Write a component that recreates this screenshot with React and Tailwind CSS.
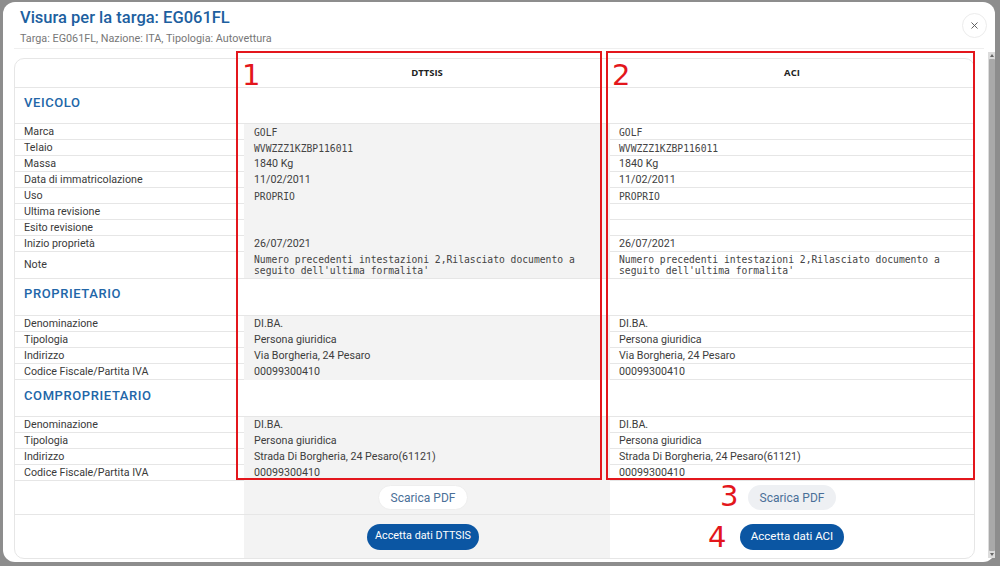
import { X } from "lucide-react";

const veicolo = [
  { label: "Marca", value: "GOLF", mono: true },
  { label: "Telaio", value: "WVWZZZ1KZBP116011", mono: true },
  { label: "Massa", value: "1840 Kg" },
  { label: "Data di immatricolazione", value: "11/02/2011" },
  { label: "Uso", value: "PROPRIO", mono: true },
  { label: "Ultima revisione", value: "" },
  { label: "Esito revisione", value: "" },
  { label: "Inizio proprietà", value: "26/07/2021" },
  {
    label: "Note",
    value: "Numero precedenti intestazioni 2,Rilasciato documento a seguito dell'ultima formalita'",
    mono: true,
    tall: true,
  },
];

const proprietario = [
  { label: "Denominazione", value: "DI.BA." },
  { label: "Tipologia", value: "Persona giuridica" },
  { label: "Indirizzo", value: "Via Borgheria, 24 Pesaro" },
  { label: "Codice Fiscale/Partita IVA", value: "00099300410" },
];

const comproprietario = [
  { label: "Denominazione", value: "DI.BA." },
  { label: "Tipologia", value: "Persona giuridica" },
  { label: "Indirizzo", value: "Strada Di Borgheria, 24 Pesaro(61121)" },
  { label: "Codice Fiscale/Partita IVA", value: "00099300410" },
];

function Value({ row }) {
  return (
    <div
      className={
        row.mono
          ? "font-['DejaVu_Sans_Mono',monospace] text-[9.7px] leading-[11px] text-[#444]"
          : "text-[10.7px] leading-[14px] text-[#3d3d3d]"
      }
    >
      {row.value}
    </div>
  );
}

function DataRow({ row }) {
  const h = row.tall ? "h-[27px]" : "h-[16px]";
  return (
    <div className={`grid grid-cols-[229px_366px_1fr] border-b border-[#e6e6e6] ${h}`}>
      <div className="flex items-center pl-[9px] text-[10.7px] text-[#3a3a3a]">
        {row.label}
      </div>
      <div className="flex items-center pl-[10px] bg-[#f3f3f3]">
        <Value row={row} />
      </div>
      <div className="flex items-center pl-[9px]">
        <Value row={row} />
      </div>
    </div>
  );
}

function Section({ title, h, pad }) {
  return (
    <div className={`grid grid-cols-[229px_366px_1fr] border-b border-[#e6e6e6] ${h}`}>
      <div className={`flex items-center pl-[9px] ${pad} text-[13px] font-medium tracking-[0.6px] text-[#2266a8]`}>
        {title}
      </div>
      <div />
      <div />
    </div>
  );
}

function Mark({ n, className }) {
  return (
    <div
      className={`absolute font-['DejaVu_Sans',sans-serif] text-[29px] leading-none text-[#e3161c] ${className}`}
    >
      {n}
    </div>
  );
}

export default function App() {
  return (
    <div className="relative w-[1000px] h-[566px] bg-[#8d8d8d] overflow-hidden font-['Roboto',sans-serif]">

      {/* Dialog */}
      <div className="ml-[3px] mt-[2px] w-[992px] h-[560px] bg-white rounded-[12px] flex flex-col">

        {/* Header */}
        <div className="relative h-[46px] px-[17px] pt-[5px]">
          <h1 className="text-[16.5px] leading-[22px] font-medium text-[#1d5f9f]">
            Visura per la targa: EG061FL
          </h1>
          <p className="mt-[3px] text-[10.8px] leading-[13px] text-[#777]">
            Targa: EG061FL, Nazione: ITA, Tipologia: Autovettura
          </p>
          <button className="absolute right-[8px] top-[11px] w-[25px] h-[25px] rounded-full border border-[#ececec] flex items-center justify-center text-[#555]">
            <X size={11} strokeWidth={2} />
          </button>
        </div>

        <div className="mx-[11px] border-b border-[#efefef]" />

        {/* Body */}
        <div className="flex flex-1">

          <div className="ml-[11px] mt-[9px] w-[961px] h-[501px] border border-[#e6e6e6] rounded-[10px] overflow-hidden flex flex-col">

            <div className="grid grid-cols-[229px_366px_1fr] h-[29px] shrink-0 border-b border-[#e6e6e6] font-['Open_Sans',sans-serif] text-[9.5px] font-bold text-[#222]">
              <div />
              <div className="flex items-center justify-center">DTTSIS</div>
              <div className="flex items-center justify-center">ACI</div>
            </div>

            <Section title="VEICOLO" h="h-[36px]" pad="pb-[6px]" />
            {veicolo.map((r) => (
              <DataRow key={r.label} row={r} />
            ))}

            <Section title="PROPRIETARIO" h="h-[37px]" pad="pb-[6px]" />
            {proprietario.map((r) => (
              <DataRow key={r.label} row={r} />
            ))}

            <Section title="COMPROPRIETARIO" h="h-[37px]" pad="pb-[4px]" />
            {comproprietario.map((r) => (
              <DataRow key={r.label} row={r} />
            ))}

            {/* Scarica PDF */}
            <div className="grid grid-cols-[229px_366px_1fr] h-[34px] shrink-0 border-b border-[#e6e6e6]">
              <div />
              <div className="flex items-center justify-center pr-[8px] bg-[#f3f3f3]">
                <button className="h-[25px] px-[12px] rounded-full bg-white border border-[#eeeeee] text-[12px] text-[#4a6f98]">
                  Scarica PDF
                </button>
              </div>
              <div className="flex items-center justify-center">
                <button className="h-[25px] px-[12px] rounded-full bg-[#eef0f3] text-[12px] text-[#4a6f98]">
                  Scarica PDF
                </button>
              </div>
            </div>

            {/* Accetta */}
            <div className="grid grid-cols-[229px_366px_1fr] flex-1">
              <div />
              <div className="flex items-center justify-center pr-[8px] bg-[#f3f3f3]">
                <button className="h-[26px] px-[8px] rounded-full bg-[#0b56a3] text-[10.8px] text-white">
                  Accetta dati DTTSIS
                </button>
              </div>
              <div className="flex items-center justify-center">
                <button className="h-[26px] px-[11px] rounded-full bg-[#0b56a3] text-[11.5px] text-white">
                  Accetta dati ACI
                </button>
              </div>
            </div>

          </div>

          {/* Scrollbar */}
          <div className="ml-auto mt-[3px] w-[7px] h-[506px] bg-[#dcdcdc] flex flex-col items-center">
            <div className="mt-[2px] w-0 h-0 border-l-[2px] border-r-[2px] border-b-[3px] border-l-transparent border-r-transparent border-b-[#666]" />
            <div className="mt-[2px] w-[6px] flex-1 bg-[#a9a9a9] rounded-[1px]" />
            <div className="mt-[2px] mb-[2px] w-0 h-0 border-l-[2px] border-r-[2px] border-t-[3px] border-l-transparent border-r-transparent border-t-[#666]" />
          </div>

        </div>
      </div>

      {/* Annotations */}
      <div className="absolute left-[236px] top-[51px] w-[366px] h-[429px] border-2 border-[#e3161c]" />
      <div className="absolute left-[606px] top-[51px] w-[369px] h-[429px] border-2 border-[#e3161c]" />
      <Mark n="1" className="left-[242px] top-[61px]" />
      <Mark n="2" className="left-[612px] top-[61px]" />
      <Mark n="3" className="left-[720px] top-[482px]" />
      <Mark n="4" className="left-[708px] top-[523px]" />

    </div>
  );
}
